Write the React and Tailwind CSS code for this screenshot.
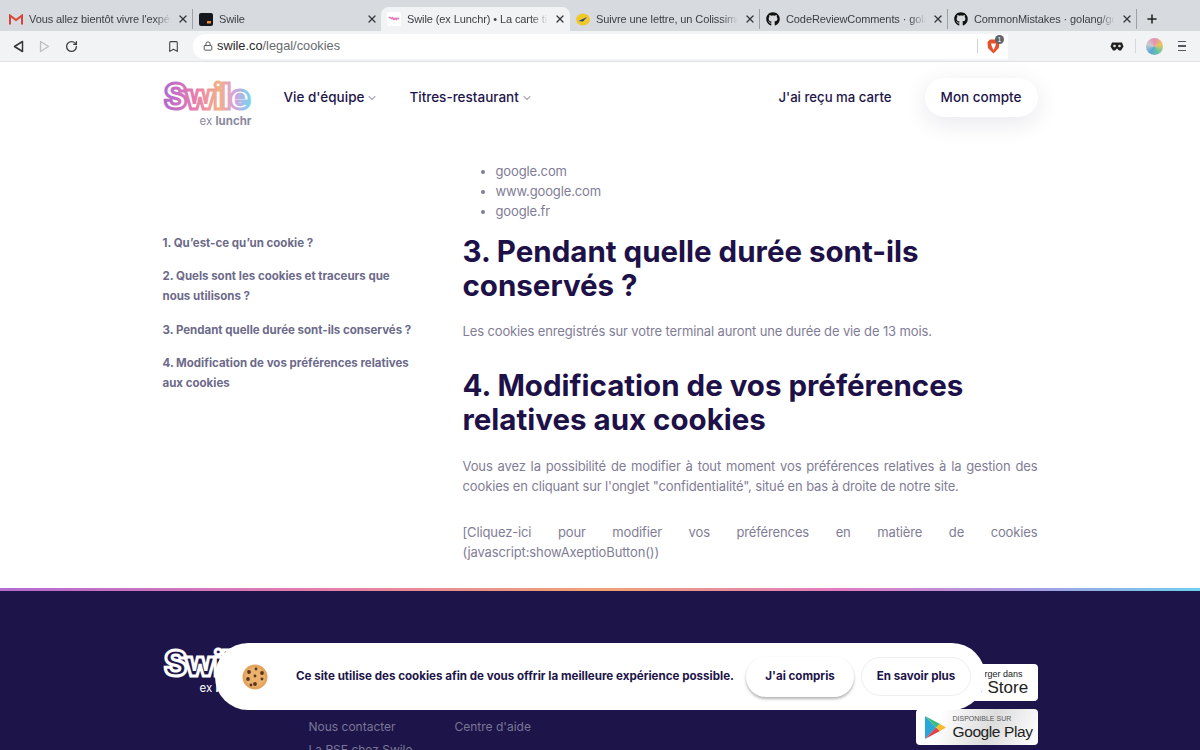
import React from "react";
import { FaGithub } from "react-icons/fa";
import { LuLock, LuBookmark, LuRotateCw, LuX, LuPlus, LuChevronDown } from "react-icons/lu";

const Gmail = () => (
  <svg width="14" height="11" viewBox="0 0 14 11"><path d="M1 10.5V1.5L7 6l6-4.5v9" fill="none" stroke="#d9453a" strokeWidth="2" /></svg>
);
const Card = () => (
  <svg width="14" height="13" viewBox="0 0 14 13"><rect width="14" height="13" rx="2" fill="#15171f" /><rect x="8" y="8" width="4" height="2.5" fill="#f08a3c" /></svg>
);
const SwileFav = () => (
  <svg width="14" height="14" viewBox="0 0 14 14"><rect width="14" height="14" rx="2" fill="#fff" /><path d="M2 6c1-2 2 2 3 0s1 3 2.5 1 1.5 2 2 0 1 1 2.5-1" fill="none" stroke="#e07ab8" strokeWidth="1.6" /></svg>
);
const Poste = () => (
  <svg width="14" height="13" viewBox="0 0 14 13"><ellipse cx="7" cy="6.5" rx="7" ry="6" fill="#f0c928" /><path d="M2.5 8 11 4 7 8.5z" fill="#25408f" /></svg>
);

function Tab({ icon, title, width, active }) {
  return (
    <div className={`relative flex h-6 items-center ${width} ${active ? "rounded-t-lg bg-[#f2f3f5] pl-[6px] pr-[4px]" : "pl-[6px] pr-[3px]"}`}>
      <div className="flex w-[14px] shrink-0 items-center justify-center">{icon}</div>
      <div className="ml-[6px] min-w-0 flex-1 overflow-hidden whitespace-nowrap text-[11px] tracking-[-0.1px] text-[#3c4043] [mask-image:linear-gradient(90deg,#000_88%,transparent_100%)]">{title}</div>
      <LuX className="ml-[6px] shrink-0 text-[#33363a]" size={12} strokeWidth={2.6} />
    </div>
  );
}
const Sep = () => <div className="h-[20px] w-px shrink-0 bg-[#9da1a6]" />;

function Chrome() {
  return (
    <div className="shrink-0 font-['Liberation_Sans',sans-serif]">
      <div className="flex h-[31px] items-end bg-[#d7dade] pl-[3px]">
        <Tab icon={<Gmail />} title="Vous allez bientôt vivre l'expérience" width="w-[189px]" />
        <div className="mb-[2px]"><Sep /></div>
        <Tab icon={<Card />} title="Swile" width="w-[188px]" />
        <Tab icon={<SwileFav />} title="Swile (ex Lunchr) • La carte titres" width="w-[189px]" active />
        <Tab icon={<Poste />} title="Suivre une lettre, un Colissimo" width="w-[189px]" />
        <div className="mb-[2px]"><Sep /></div>
        <Tab icon={<FaGithub size={14} color="#111" />} title="CodeReviewComments · golang" width="w-[187px]" />
        <div className="mb-[2px]"><Sep /></div>
        <Tab icon={<FaGithub size={14} color="#111" />} title="CommonMistakes · golang/go" width="w-[188px]" />
        <div className="mb-[2px]"><Sep /></div>
        <div className="mb-[5px] ml-[8px] flex items-center text-[#222]"><LuPlus size={14} strokeWidth={2.6} /></div>
      </div>
      <div className="flex h-[31px] items-center border-b border-[#dfe1e4] bg-[#f2f3f5]">
        <div className="flex w-[193px] shrink-0 items-center text-[#3c4043]">
          <svg className="ml-[13px]" width="11" height="13" viewBox="0 0 11 13"><path d="M9.5 1.5v10L1.5 6.5z" fill="none" stroke="#33363a" strokeWidth="1.5" strokeLinejoin="round" /></svg>
          <svg className="ml-[15px]" width="11" height="13" viewBox="0 0 11 13"><path d="M1.5 1.5v10l8-5z" fill="none" stroke="#bcbfc3" strokeWidth="1.3" strokeLinejoin="round" /></svg>
          <LuRotateCw className="ml-[15px]" size={13} strokeWidth={2.4} />
          <LuBookmark className="ml-[89px]" size={13} strokeWidth={2} />
        </div>
        <div className="flex h-[25px] w-[815px] shrink-0 items-center rounded-l-[12px] bg-white pl-[10px] text-[12.8px]">
          <LuLock className="text-[#55585c]" size={10} strokeWidth={2.4} />
          <span className="ml-[4px] text-[#26282b]">swile.co</span>
          <span className="text-[#686b70]">/legal/cookies</span>
          <div className="ml-auto mr-[9px] h-[14px] w-px bg-[#d0d2d5]" />
          <div className="relative mr-[8px]">
            <svg width="13" height="15" viewBox="0 0 13 15"><path d="M3 0.5h7l2.5 2.5-.7 6L6.5 14.5.9 9 .5 3z" fill="#e2512a" /><path d="M4 4.5h5L8 8l-1.5 3L5 8z" fill="#fff" /></svg>
            <div className="absolute left-[8px] top-[-4px] flex size-[9px] items-center justify-center rounded-full bg-[#5f6368] text-[7px] leading-none text-white">1</div>
          </div>
        </div>
        <div className="ml-[102px] flex items-center">
          <svg width="14" height="9" viewBox="0 0 14 9"><path d="M2 0.5h10l1.5 4L11 8.5H9L7 6.5 5 8.5H3L.5 4.5z" fill="#20201f" /><circle cx="4.5" cy="4" r="1.3" fill="#e8e8e8" /><circle cx="9.5" cy="4" r="1.3" fill="#e8e8e8" /></svg>
          <div className="ml-[11px] h-[14px] w-px bg-[#d5d7da]" />
          <div className="ml-[10px] size-[17px] rounded-full bg-[conic-gradient(#e88fb5,#e8c75c,#67c7a0,#5aa3d8,#c8ccd0,#e88fb5)]" />
          <div className="ml-[15px] flex flex-col gap-[3px]">
            <div className="h-[1.5px] w-[8px] bg-[#55585c]" /><div className="h-[1.5px] w-[8px] bg-[#55585c]" /><div className="h-[1.5px] w-[8px] bg-[#55585c]" />
          </div>
        </div>
      </div>
    </div>
  );
}

function Logo({ mono }) {
  const id = mono ? "g2" : "g1";
  return (
    <div className="relative h-[50px] w-[90px] shrink-0">
      <svg width="90" height="38" viewBox="0 0 90 38" className="absolute left-0 top-0">
        <defs>
          <linearGradient id={id} x1="0" x2="1" y1="0" y2="0">
            {mono ? <stop offset="0" stopColor="#fff" /> : <stop offset="0" stopColor="#b06ad0" />}
            {!mono && <stop offset="0.35" stopColor="#e77bb0" />}
            {!mono && <stop offset="0.65" stopColor="#f2b08a" />}
            {!mono && <stop offset="0.82" stopColor="#d9a0dc" />}
            <stop offset="1" stopColor={mono ? "#fff" : "#7fd0ee"} />
          </linearGradient>
        </defs>
        <text x="1" y="31" fontFamily="Inter, sans-serif" fontWeight="800" fontSize="35" letterSpacing="-2" fill={mono ? "#1d1549" : "#fff"} stroke={`url(#${id})`} strokeWidth="3">Swile</text>
      </svg>
      <div className={`absolute right-[1px] top-[38px] text-[11.5px] font-bold leading-none ${mono ? "text-white" : "text-[#8b8a9e]"}`}>
        <span className="font-normal">ex </span>lunchr
      </div>
    </div>
  );
}

function Header() {
  return (
    <div className="mx-auto flex h-[99px] w-[875px] shrink-0 items-start pt-[16px] text-[13.5px] font-medium text-[#1d1549]">
      <Logo />
      <div className="ml-[31px] flex h-[39px] items-center">
        Vie d'équipe<LuChevronDown className="ml-[2px] text-[#a9a9b8]" size={12} strokeWidth={2.2} />
      </div>
      <div className="ml-[31px] flex h-[39px] items-center">
        Titres-restaurant<LuChevronDown className="ml-[2px] text-[#a9a9b8]" size={12} strokeWidth={2.2} />
      </div>
      <div className="ml-auto flex h-[39px] items-center text-[13.2px]">J'ai reçu ma carte</div>
      <div className="ml-[33px] flex h-[39px] w-[113px] items-center justify-center rounded-full bg-white shadow-[0_6px_24px_rgba(29,21,73,0.10)]">Mon compte</div>
    </div>
  );
}

function Main() {
  return (
    <div className="mx-auto flex w-[875px] shrink-0 pb-[26px]">
      <div className="w-[300px] shrink-0 pr-[46px] pt-[72px] text-[11.500px] font-bold leading-[20px] text-[#6c6a8a]">
        <div>1. Qu’est-ce qu’un cookie ?</div>
        <div className="mt-[13px]">2. Quels sont les cookies et traceurs que nous utilisons ?</div>
        <div className="mt-[14px] whitespace-nowrap">3. Pendant quelle durée sont-ils conservés ?</div>
        <div className="mt-[13px]">4. Modification de vos préférences relatives aux cookies</div>
      </div>
      <div className="min-w-0 flex-1 text-[13px] leading-[20px] tracking-[-0.13px] text-[#7f7d96]">
        <ul className="list-disc pl-[33px]">
          <li>google.com</li>
          <li>www.google.com</li>
          <li>google.fr</li>
        </ul>
        <h2 className="mt-[13px] text-[29.500px] font-bold leading-[34px] tracking-normal text-[#1d1148]">3. Pendant quelle durée sont-ils conservés ?</h2>
        <p className="mt-[19px]">Les cookies enregistrés sur votre terminal auront une durée de vie de 13 mois.</p>
        <h2 className="mt-[27px] text-[29.500px] font-bold leading-[34px] tracking-normal text-[#1d1148]">4. Modification de vos préférences relatives aux cookies</h2>
        <p className="mt-[20px] text-justify">Vous avez la possibilité de modifier à tout moment vos préférences relatives à la gestion des cookies en cliquant sur l'onglet "confidentialité", situé en bas à droite de notre site.</p>
        <p className="mt-[26px] text-justify">[Cliquez-ici pour modifier vos préférences en matière de cookies (javascript:showAxeptioButton())</p>
      </div>
    </div>
  );
}

function Footer() {
  return (
    <div className="min-h-[200px] shrink-0 bg-[#1d1549]">
      <div className="h-[3px] bg-[linear-gradient(90deg,#b36ad0_0%,#e27bae_25%,#f1a272_50%,#e27bc0_70%,#a79ae0_85%,#6fd0ee_100%)]" />
      <div className="mx-auto flex w-[875px] pt-[54px]">
        <Logo mono />
        <div className="ml-[56px] w-[146px] pt-[70px] text-[12px] leading-[23px] text-[#7a7596]">
          <div>Nous contacter</div>
          <div>La RSE chez Swile</div>
        </div>
        <div className="pt-[70px] text-[12px] leading-[23px] text-[#7a7596]">Centre d'aide</div>
        <div className="ml-auto flex w-[122px] flex-col gap-[8px] pt-[19px] font-['Liberation_Sans',sans-serif] text-[#222]">
          <div className="flex h-[37px] flex-col justify-center rounded-[4px] bg-white pl-[37px]">
            <div className="whitespace-nowrap text-[9px] leading-[10px]">Télécharger dans</div>
            <div className="whitespace-nowrap text-[17px] leading-[18px]">App Store</div>
          </div>
          <div className="flex h-[36px] items-center rounded-[4px] bg-[linear-gradient(110deg,#fff_20%,#dcdcdc_60%,#fff_100%)] pl-[9px]">
            <svg className="shrink-0" width="21" height="23" viewBox="0 0 21 23">
              <path d="M0 0v23L11 11.5z" fill="#2aa6d8" />
              <path d="M0 0l11 11.5L15 8z" fill="#3dbb7a" />
              <path d="M0 23l11-11.5L15 15z" fill="#e0424a" />
              <path d="M15 8l6 3.5-6 3.5-4-3.500z" fill="#f7bb2c" />
            </svg>
            <div className="ml-[7px] min-w-0">
              <div className="whitespace-nowrap text-[7px] leading-[9px] text-[#555]">DISPONIBLE SUR</div>
              <div className="whitespace-nowrap text-[15.500px] leading-[17px] tracking-[-0.4px]">Google Play</div>
            </div>
          </div>
        </div>
      </div>
    </div>
  );
}

function CookieIcon() {
  return (
    <svg width="26" height="26" viewBox="0 0 26 26">
      <circle cx="13" cy="13" r="12.500" fill="#e2a35c" />
      <circle cx="13" cy="13" r="10" fill="#eab26c" />
      {[[7,8],[14,5],[20,9],[13,12],[6,15],[20,15],[13,20],[9,21]].map(([x,y],i)=>(<circle key={i} cx={x} cy={y} r={i%2?1.4:1.9} fill="#5d3320" />))}
    </svg>
  );
}

function Banner() {
  return (
    <div className="absolute left-[215px] top-[643px] flex h-[67px] w-[770px] items-center rounded-[33px] bg-white text-[11.600px] font-bold text-[#1d1549]">
      <div className="ml-[27px] shrink-0"><CookieIcon /></div>
      <div className="ml-[28px] whitespace-nowrap">Ce site utilise des cookies afin de vous offrir la meilleure expérience possible.</div>
      <div className="ml-auto flex h-[40px] w-[108px] items-center justify-center rounded-full bg-white shadow-[0_2px_3px_rgba(0,0,0,0.3)]">J'ai compris</div>
      <div className="ml-[7px] mr-[14px] flex h-[39px] w-[110px] items-center justify-center rounded-full border border-[#eeeef0] bg-white">En savoir plus</div>
    </div>
  );
}

export default function App() {
  return (
    <div className="relative flex h-[750px] w-[1200px] flex-col overflow-hidden bg-white font-['Inter',sans-serif]">
      <Chrome />
      <Header />
      <Main />
      <Footer />
      <Banner />
    </div>
  );
}
